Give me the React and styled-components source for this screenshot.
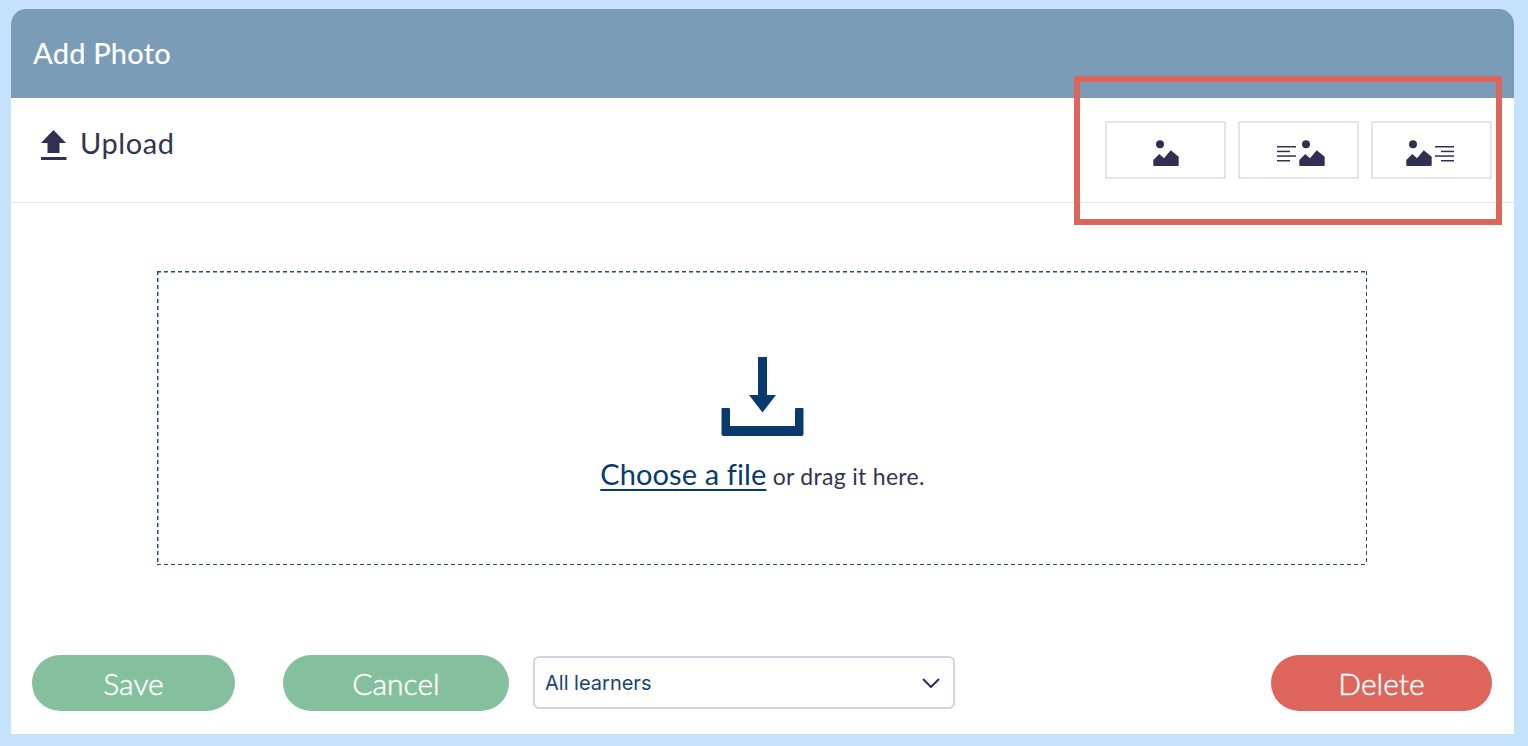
import styled, { createGlobalStyle } from "styled-components";

const GlobalStyle = createGlobalStyle`
  html, body {
    margin: 0;
    padding: 0;
    background: #c6e2fb;
  }
  * {
    box-sizing: border-box;
  }
`;

const FONT = `Lato, "Noto Sans", sans-serif`;
const DASH = "#1f4c78";

const UploadIcon = () => (
  <svg width="26" height="31" viewBox="0 0 26 31">
    <path d="M12.5 0 L25 13 H18.5 V23 H6.5 V13 H0 Z" fill="#2f3052" />
    <rect y="27" width="25.500" height="3" fill="#2f3052" />
  </svg>
);

const PICTURE_PATH = "M.3 19 6.300 13 11 17.300 17.700 9.300 25.700 15.700V24a1 1 0 0 1-1 1H1.300a1 1 0 0 1-1-1Z";

const PictureIcon = () => (
  <svg width="26" height="26" viewBox="0 -1 26 26" fill="#2f3052">
    <circle cx="7" cy="3.300" r="4" />
    <path d={PICTURE_PATH} />
  </svg>
);

const TextPictureIcon = () => (
  <svg width="48" height="26" viewBox="0 -1 48 26" fill="#2f3052">
    <rect y="5" width="19" height="1.500" />
    <rect y="9.700" width="13" height="1.500" />
    <rect y="14.300" width="19" height="1.500" />
    <rect y="19" width="13" height="1.500" />
    <g transform="translate(22 0)">
      <circle cx="7" cy="3.300" r="4" />
      <path d={PICTURE_PATH} />
    </g>
  </svg>
);

const PictureTextIcon = () => (
  <svg width="48" height="26" viewBox="0 -1 48 26" fill="#2f3052">
    <circle cx="7" cy="3.300" r="4" />
    <path d={PICTURE_PATH} />
    <rect x="29" y="5" width="19" height="1.500" />
    <rect x="35" y="9.700" width="13" height="1.500" />
    <rect x="29" y="14.300" width="19" height="1.500" />
    <rect x="35" y="19" width="13" height="1.500" />
  </svg>
);

const DownloadIcon = () => (
  <svg width="84" height="79" viewBox="0 0 84 79" fill="#083b6b">
    <path d="M37 0h9v38h9L41.500 55.500 28 38h9Z" />
    <path d="M1.500 51H8a1 1 0 0 1 1 1v17h65V52a1 1 0 0 1 1-1h6.500a1 1 0 0 1 1 1v25a2 2 0 0 1-2 2H2.500a2 2 0 0 1-2-2V52a1 1 0 0 1 1-1Z" />
  </svg>
);

const Chevron = () => (
  <svg width="18" height="10" viewBox="0 0 18 10" fill="none" stroke="#2f3052" strokeWidth="2">
    <path d="M1 1l8 8 8-8" />
  </svg>
);

const Page = styled.div`
  height: 746px;
  padding: 9px 14px 12px 11px;
  font-family: ${FONT};
  color: #33344f;
`;

const Card = styled.div`
  position: relative;
  height: 725px;
  background: #fff;
  border-radius: 15px 15px 0 0;
  display: flex;
  flex-direction: column;
`;

const Header = styled.header`
  height: 89px;
  flex: none;
  background: #7a9cb6;
  border-radius: 15px 15px 0 0;
  padding: 0 22px 2px;
  display: flex;
  align-items: center;
  color: #fff;
  font-size: 29px;
  font-weight: 500;
  letter-spacing: 0.2px;
`;

const Toolbar = styled.div`
  height: 105px;
  flex: none;
  border-bottom: 1px solid #dfe3ea;
  padding: 23px 22px 0 30px;
  display: flex;
  justify-content: space-between;
  align-items: flex-start;
`;

const UploadLabel = styled.div`
  display: flex;
  align-items: flex-start;
  gap: 13px;
  padding-top: 7px;
  font-size: 29px;
  line-height: 30px;
  letter-spacing: 0.6px;
  svg {
    margin-top: 2px;
  }
`;

const LayoutOptions = styled.div`
  display: flex;
  gap: 12px;
`;

const LayoutButton = styled.button`
  width: 121px;
  height: 58px;
  border: 2px solid #e2e6ec;
  background: #fff;
  padding: 17px ${(p) => p.$right || 0}px 0 ${(p) => p.$left || 0}px;
  display: flex;
  justify-content: center;
  align-items: flex-start;
`;

/* the dashes are longer than a 1px css dashed border gives, so gradients */
const DropArea = styled.div`
  flex: none;
  height: 294px;
  margin: 68px 147px 0 146px;
  padding: 86px 0 0 2px;
  display: flex;
  flex-direction: column;
  align-items: center;
  background-image:
    repeating-linear-gradient(to right, ${DASH} 0 4px, transparent 4px 7px),
    repeating-linear-gradient(to right, ${DASH} 0 4px, transparent 4px 7px),
    repeating-linear-gradient(to bottom, ${DASH} 0 4px, transparent 4px 7px),
    repeating-linear-gradient(to bottom, ${DASH} 0 4px, transparent 4px 7px);
  background-size: 100% 1.5px, 100% 1.5px, 1.5px 100%, 1.5px 100%;
  background-position: 0 0, 0 100%, 0 0, 100% 0;
  background-repeat: no-repeat;
`;

const DropText = styled.div`
  margin-top: 21px;
  margin-right: 1px;
  font-size: 23px;
  line-height: 34px;
  letter-spacing: 0.3px;
  white-space: nowrap;
`;

const FileLink = styled.a`
  color: #083b6b;
  font-size: 29px;
  letter-spacing: 0.1px;
  text-decoration: underline;
  text-underline-offset: 4px;
  text-decoration-thickness: 2px;
`;

const Footer = styled.div`
  margin-top: 90px;
  padding: 0 22px 0 21px;
  display: flex;
  align-items: flex-start;
`;

const PillButton = styled.button`
  width: ${(p) => p.$width}px;
  height: 56px;
  margin-right: ${(p) => p.$gap}px;
  margin-left: ${(p) => (p.$end ? "auto" : "0")};
  border: none;
  border-radius: 28px;
  background: ${(p) => p.$color};
  color: #fff;
  font-family: ${FONT};
  font-size: 30px;
  font-weight: 300;
  -webkit-text-stroke: 0.5px #fff;
`;

const AudienceSelect = styled.div`
  width: 422px;
  height: 53px;
  margin-top: 1px;
  border: 2px solid #ccd7e2;
  border-radius: 6px;
  padding: 0 13px 0 10px;
  display: flex;
  justify-content: space-between;
  align-items: center;
  color: #16456f;
  font-family: Inter, "Liberation Sans", sans-serif;
  font-size: 20px;
`;

const Callout = styled.div`
  position: absolute;
  left: 1063px;
  top: 67px;
  width: 428px;
  height: 149px;
  border: 6px solid #dd655c;
  pointer-events: none;
`;

export default function App() {
  return (
    <Page>
      <GlobalStyle />
      <Card>
        <Header>Add Photo</Header>
        <Toolbar>
          <UploadLabel>
            <UploadIcon />
            Upload
          </UploadLabel>
          <LayoutOptions>
            <LayoutButton><PictureIcon /></LayoutButton>
            <LayoutButton $left={4}><TextPictureIcon /></LayoutButton>
            <LayoutButton $right={3}><PictureTextIcon /></LayoutButton>
          </LayoutOptions>
        </Toolbar>
        <DropArea>
          <DownloadIcon />
          <DropText>
            <FileLink>Choose a file</FileLink> or drag it here.
          </DropText>
        </DropArea>
        <Footer>
          <PillButton $width={203} $gap={48} $color="#84c09e">Save</PillButton>
          <PillButton $width={226} $gap={24} $color="#84c09e">Cancel</PillButton>
          <AudienceSelect>
            All learners
            <Chevron />
          </AudienceSelect>
          <PillButton $width={221} $gap={0} $end $color="#dd655c">Delete</PillButton>
        </Footer>
        <Callout />
      </Card>
    </Page>
  );
}
